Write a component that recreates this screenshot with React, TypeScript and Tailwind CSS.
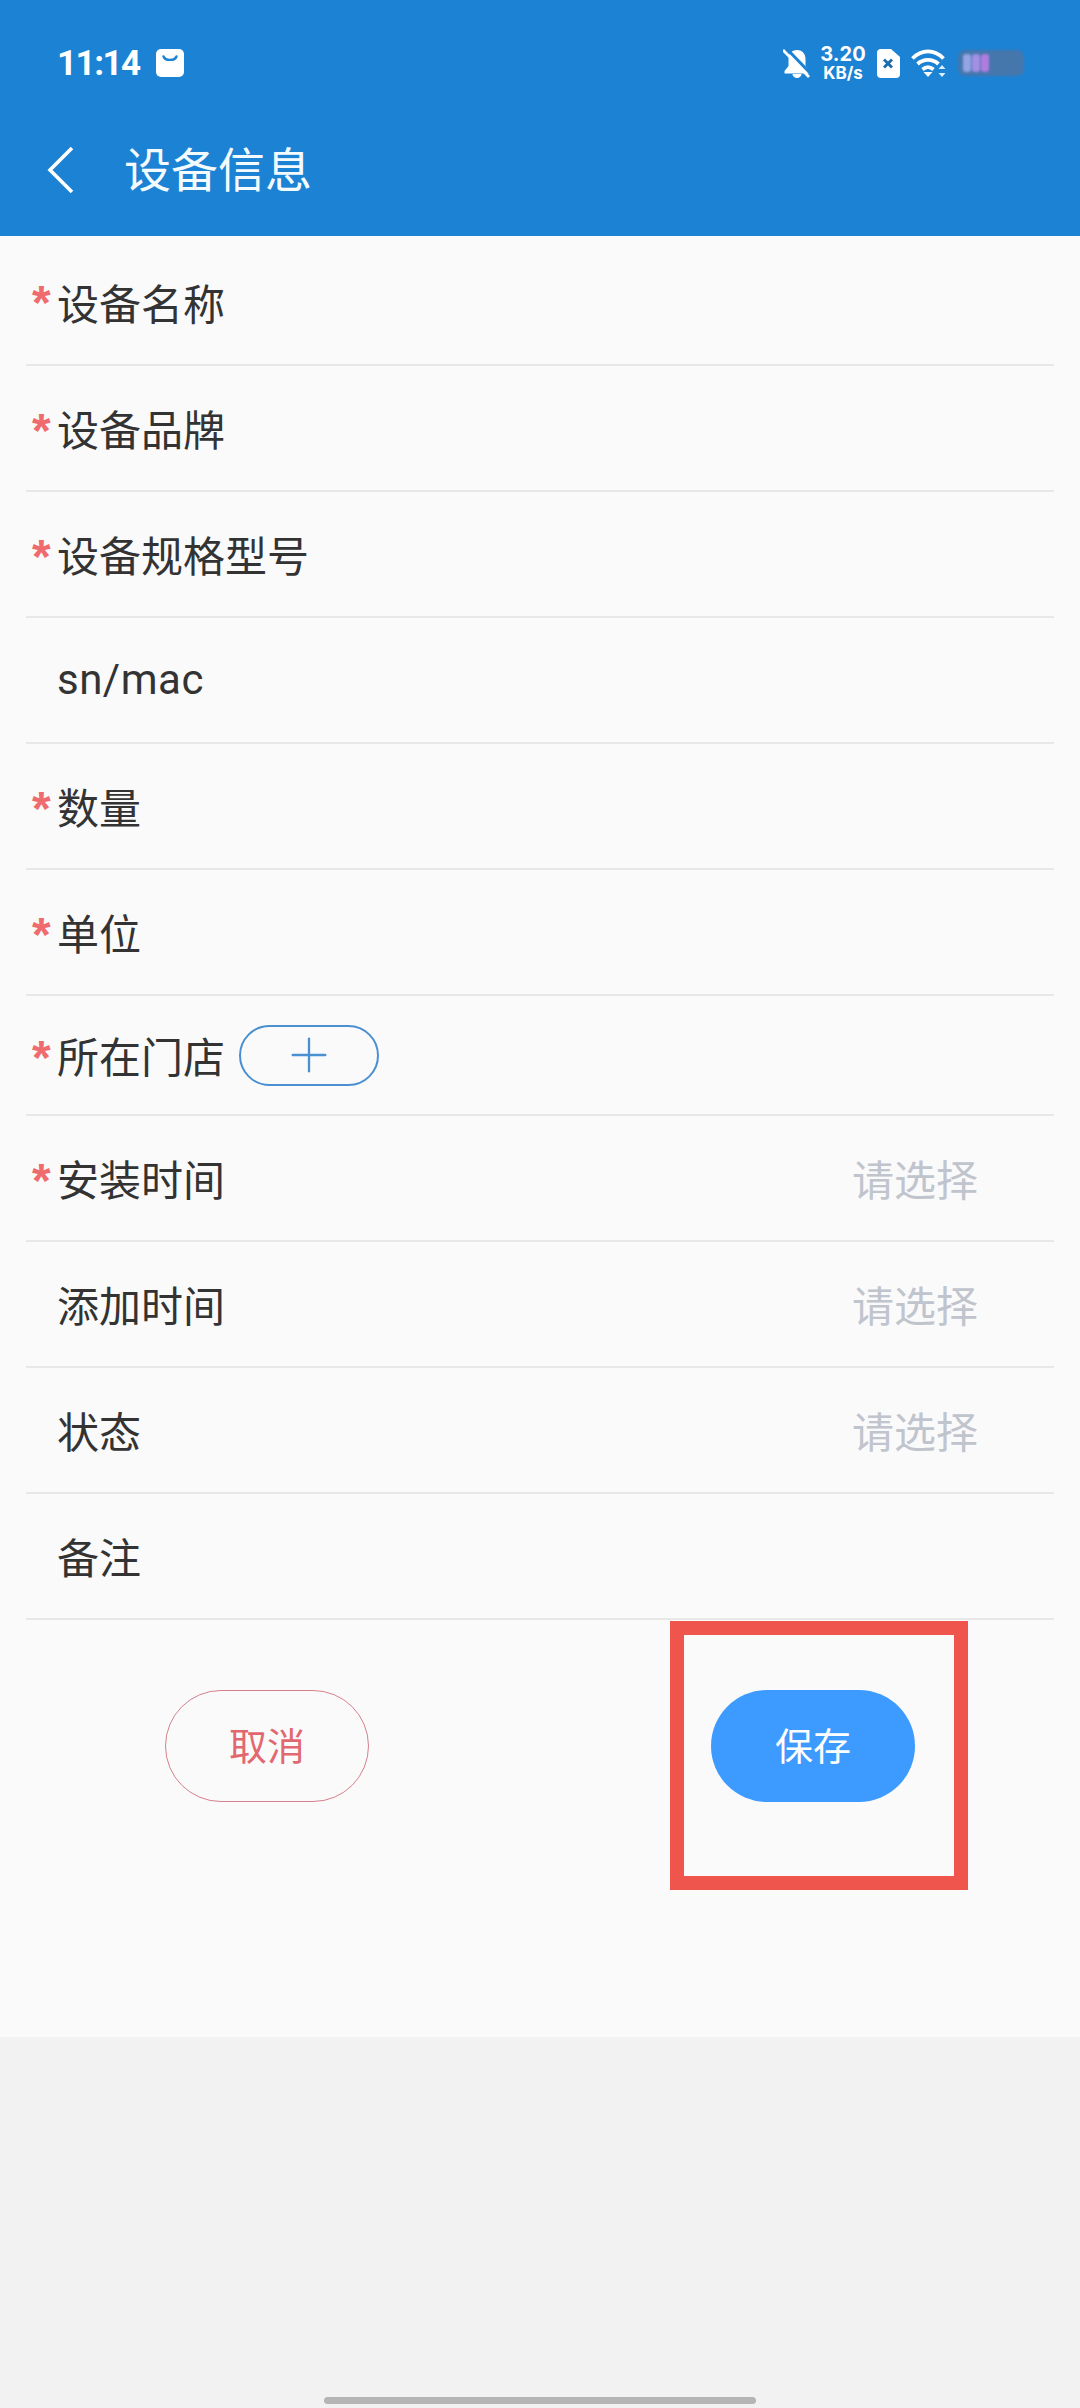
import { Plus } from 'lucide-react';

const cjk = { fontFamily: '"Noto Sans CJK SC", "Noto Sans", sans-serif' };

type Field = {
  label: string;
  height: string;
  required?: boolean;
  picker?: boolean;
  addButton?: boolean;
};

const fields: Field[] = [
  { label: '设备名称', required: true, height: 'h-[130px] pt-[3px]' },
  { label: '设备品牌', required: true, height: 'h-[126px]' },
  { label: '设备规格型号', required: true, height: 'h-[126px]' },
  { label: 'sn/mac', height: 'h-[126px]' },
  { label: '数量', required: true, height: 'h-[126px]' },
  { label: '单位', required: true, height: 'h-[126px]' },
  { label: '所在门店', required: true, addButton: true, height: 'h-[120px]' },
  { label: '安装时间', required: true, picker: true, height: 'h-[126px]' },
  { label: '添加时间', picker: true, height: 'h-[126px]' },
  { label: '状态', picker: true, height: 'h-[126px]' },
  { label: '备注', height: 'h-[126px]' },
];

function StatusBar() {
  return (
    <div className="flex h-[124px] items-center justify-between pl-[57px] pr-[56px] pt-[2px]">
      <div className="flex items-center gap-[16px]">
        <span className="font-['Roboto'] text-[35px] leading-none font-bold tracking-[-1.5px] text-white">11:14</span>
        <svg width="28" height="28" viewBox="0 0 28 28">
          <rect width="28" height="28" rx="5" fill="#fff" />
          <path d="M7.500 7.500c1.500 4.500 11.500 4.500 13 0" fill="none" stroke="#1c82d4" strokeWidth="2.400" strokeLinecap="round" />
        </svg>
      </div>
      <div className="flex items-center">
        <svg width="28" height="30" viewBox="0 0 28 30" className="mr-[9px]">
          <path d="M14 2c-5.500 0-8.500 4-8.500 9v7l-4 5v2.500h25v-2.500l-4-5v-7c0-5-3-9-8.500-9z" fill="#fff" />
          <path d="M9.500 26a4.500 4 0 0 0 9 0z" fill="#fff" />
          <path d="M2 -1l27 28" stroke="#1c82d4" strokeWidth="3" />
          <path d="M0 2l26 27" stroke="#fff" strokeWidth="2.800" />
        </svg>
        <div className="mr-[11px] flex w-[46px] flex-col items-center font-['Inter'] font-bold text-white">
          <span className="text-[20px] leading-[21px]">3.20</span>
          <span className="text-[17px] leading-[17px]">KB/s</span>
        </div>
        <svg width="23" height="29" viewBox="0 0 23 29" className="mr-[11px]">
          <path d="M4 0h10l9 8v17a4 4 0 0 1-4 4H4a4 4 0 0 1-4-4V4a4 4 0 0 1 4-4z" fill="#fff" />
          <path d="M7 10.500l8 8M15 10.500l-8 8" stroke="#1a6ba8" strokeWidth="2.800" />
        </svg>
        <svg width="36" height="28" viewBox="0 0 36 28" className="mr-[11px]">
          <g fill="none" stroke="#fff" strokeWidth="3.800">
            <path d="M1.500 9.500c9-9.500 22-9.500 31 0" />
            <path d="M6.500 15c6-5.500 15-5.500 21 0" />
            <path d="M11.500 20.500c3.500-3 7.500-3 11 0" />
          </g>
          <path d="M12.500 23h9l-4.500 5z" fill="#fff" />
          <path d="M31 16l3.500 4h-7zM31 28l3.500-4h-7z" fill="#dbeeff" />
        </svg>
        <div className="flex h-[26px] w-[66px] items-center gap-[1px] rounded-[7px] bg-[#4577ad] pl-[5px] blur-[1px]">
          <span className="h-[18px] w-[8px] rounded-[3px] bg-[#94a5e6]" />
          <span className="h-[18px] w-[8px] rounded-[3px] bg-[#a58fe2]" />
          <span className="h-[18px] w-[8px] rounded-[3px] bg-[#b07ce0]" />
        </div>
      </div>
    </div>
  );
}

function FieldRow({ field }: { field: Field }) {
  return (
    <div className={`relative mx-[26px] flex items-center border-b-2 border-[#e8e8e8] pl-[31px] pr-[76px] ${field.height}`}>
      {field.required && (
        <span className="absolute left-[6px] top-1/2 mt-[-21px] font-['Liberation_Sans'] text-[48px] leading-none font-bold text-[#ee6b6e]">
          *
        </span>
      )}
      <span
        className="text-[42px] leading-none text-[#333333]"
        style={field.label === 'sn/mac' ? { fontFamily: 'Roboto, sans-serif', letterSpacing: '0.5px' } : cjk}
      >
        {field.label}
      </span>
      {field.addButton && (
        <span className="ml-[14px] flex h-[61px] w-[140px] items-center justify-center rounded-full border-2 border-[#4a90d0]">
          <Plus size={56} strokeWidth={1} className="text-[#4a90d0]" />
        </span>
      )}
      {field.picker && (
        <span className="ml-auto text-[42px] leading-none text-[#c0c4cc]" style={cjk}>
          请选择
        </span>
      )}
    </div>
  );
}

export default function App() {
  return (
    <div className="flex h-[2408px] w-[1080px] flex-col overflow-hidden bg-[#f2f2f2]" style={cjk}>
      <header className="h-[236px] bg-[#1c82d4]">
        <StatusBar />
        <div className="flex h-[92px] items-center pl-[47px]">
          <svg width="28" height="48" viewBox="0 0 28 48">
            <path d="M25 2L3 24l22 22" fill="none" stroke="#fff" strokeWidth="3.600" />
          </svg>
          <h1 className="mb-[8px] ml-[49px] text-[47px] leading-none font-normal text-[#f4fbff]">设备信息</h1>
        </div>
      </header>

      <main className="relative h-[1801px] bg-[#fafafb]">
        {fields.map((field) => (
          <FieldRow key={field.label} field={field} />
        ))}

        <div className="mt-[70px] flex pl-[165px]">
          <button className="flex h-[112px] w-[204px] items-center justify-center rounded-full border border-[#d5808c] pb-[5px] text-[38px] text-[#e2686f]">
            取消
          </button>
          <button className="ml-[342px] flex h-[112px] w-[204px] items-center justify-center rounded-full bg-[#3d9bff] pb-[5px] text-[38px] text-white">
            保存
          </button>
        </div>

        {/* annotation box around the save button */}
        <div className="absolute left-[670px] top-[1385px] h-[269px] w-[298px] border-[14px] border-[#f0554d]" />
      </main>

      <div className="flex flex-1 items-end justify-center pb-[4px]">
        <div className="h-[7px] w-[432px] rounded-full bg-[#b5b5b5]" />
      </div>
    </div>
  );
}
